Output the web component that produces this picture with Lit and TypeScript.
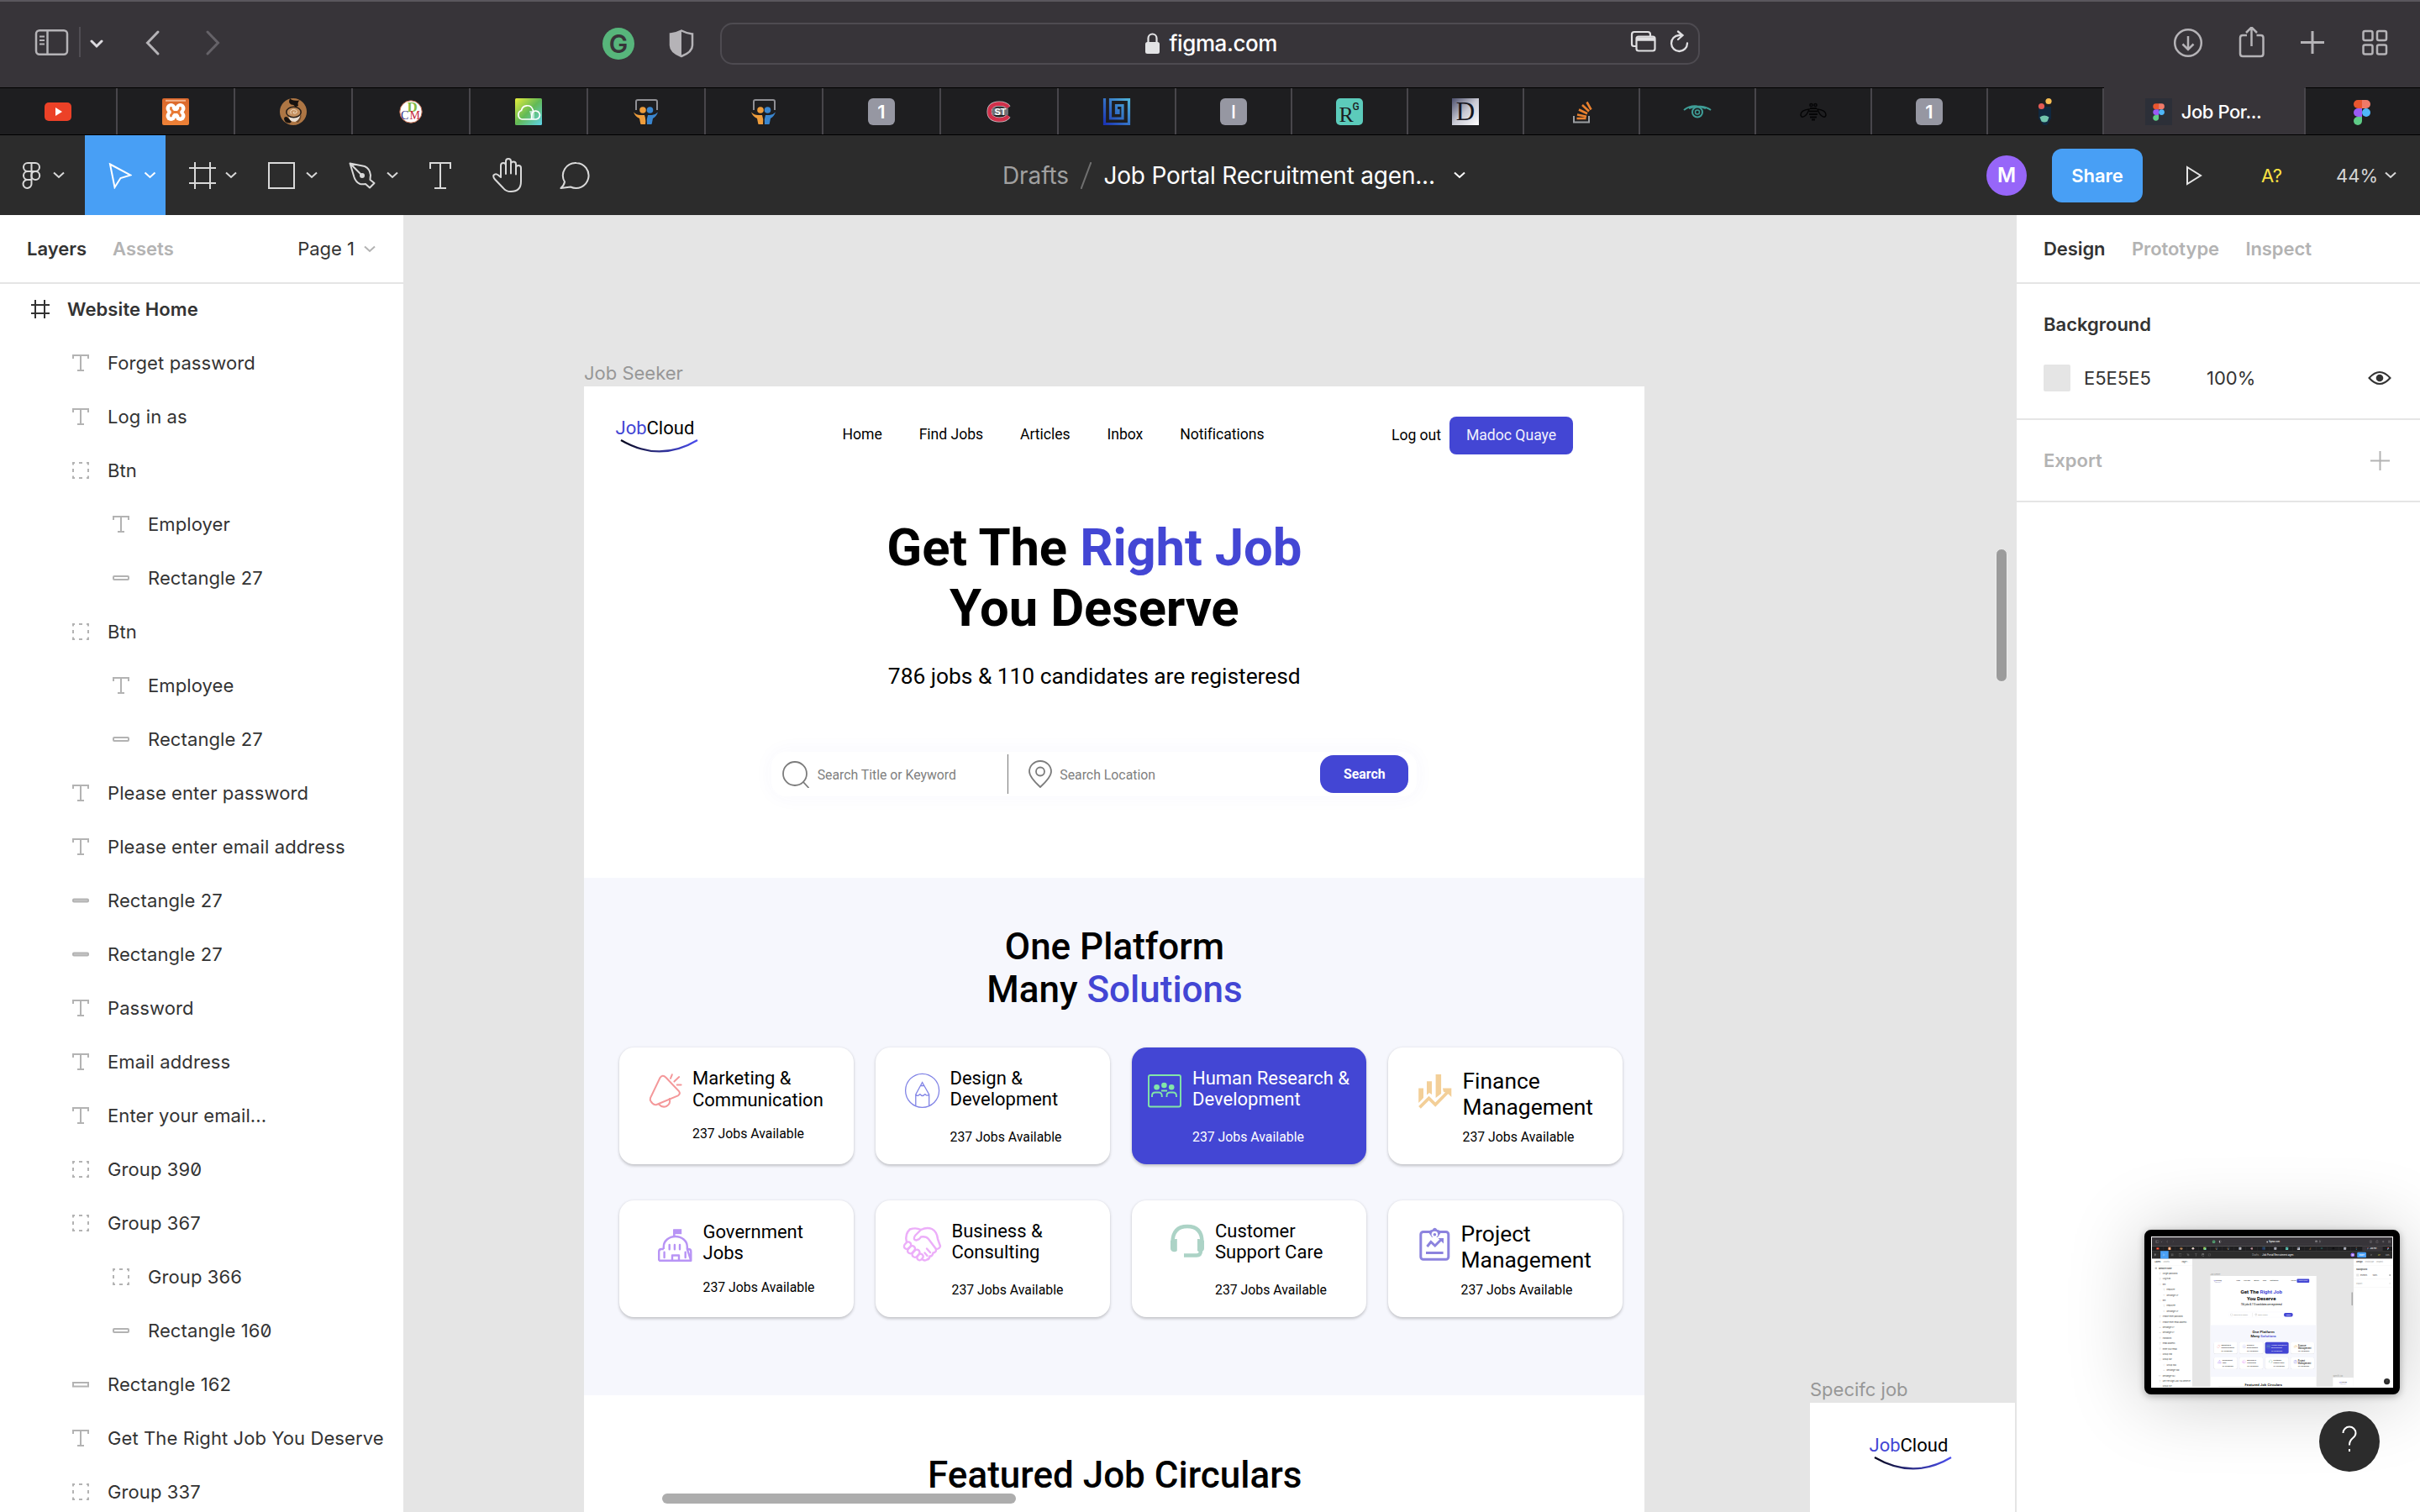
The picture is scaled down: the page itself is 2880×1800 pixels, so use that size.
import { LitElement, html, svg, css, nothing } from "lit";
import { customElement, property } from "lit/decorators.js";

type Kind = "frame" | "text" | "group" | "rect" | "rect-filled" | "rect-square";
interface Layer { kind: Kind; name: string; depth: number; }

const layers: Layer[] = [
  { kind: "frame", name: "Website Home", depth: 0 },
  { kind: "text", name: "Forget password", depth: 1 },
  { kind: "text", name: "Log in as", depth: 1 },
  { kind: "group", name: "Btn", depth: 1 },
  { kind: "text", name: "Employer", depth: 2 },
  { kind: "rect", name: "Rectangle 27", depth: 2 },
  { kind: "group", name: "Btn", depth: 1 },
  { kind: "text", name: "Employee", depth: 2 },
  { kind: "rect", name: "Rectangle 27", depth: 2 },
  { kind: "text", name: "Please enter password", depth: 1 },
  { kind: "text", name: "Please enter email address", depth: 1 },
  { kind: "rect-filled", name: "Rectangle 27", depth: 1 },
  { kind: "rect-filled", name: "Rectangle 27", depth: 1 },
  { kind: "text", name: "Password", depth: 1 },
  { kind: "text", name: "Email address", depth: 1 },
  { kind: "text", name: "Enter your email...", depth: 1 },
  { kind: "group", name: "Group 390", depth: 1 },
  { kind: "group", name: "Group 367", depth: 1 },
  { kind: "group", name: "Group 366", depth: 2 },
  { kind: "rect", name: "Rectangle 160", depth: 2 },
  { kind: "rect-square", name: "Rectangle 162", depth: 1 },
  { kind: "text", name: "Get The Right Job You Deserve", depth: 1 },
  { kind: "group", name: "Group 337", depth: 1 },
];

const layerIcon = (kind: Kind) => {
  switch (kind) {
    case "frame":
      return svg`<path d="M4 -1v22M15 -1v22M-1 5h22M-1 15h22" stroke="#333" stroke-width="2" fill="none"/>`;
    case "text":
      return svg`<path d="M1 5V1h18v4M10 1v18M6 19h8" stroke="#b3b3b3" stroke-width="2" fill="none"/>`;
    case "group":
      return svg`<path d="M1 3.500V1h2M8 1h4M17 1h2v2.500M19 8v4M19 16.500V19h-2M12 19H8M3 19H1v-2.500M1 12V8" stroke="#b3b3b3" stroke-width="2" fill="none"/>`;
    case "rect":
      return svg`<rect x="1" y="8" width="18" height="4" rx="1" stroke="#b3b3b3" stroke-width="2" fill="#fff"/>`;
    case "rect-filled":
      return svg`<rect x="1" y="8.500" width="18" height="3" rx="1" stroke="#b3b3b3" stroke-width="2" fill="#ccc"/>`;
    case "rect-square":
      return svg`<rect x="1" y="8" width="18" height="4.500" stroke="#b3b3b3" stroke-width="2" fill="#fff"/>`;
  }
};

const chevron = (w = 14, color = "#e0e0e0") => html`<svg class="chev" width=${w} height="9" viewBox="0 0 14 9" fill="none" stroke=${color} stroke-width="2"><path d="M1 1.500l6 5.500 6-5.500"/></svg>`;

const people = svg`
  <path d="M4 14V4q0-2 2-2h21q2 0 2 2v10" fill="none" stroke="#8f8f94" stroke-width="2"/>
  <circle cx="12" cy="14" r="3.800" fill="#ee9d3c"/><circle cx="20.500" cy="14" r="3.800" fill="#3a86cf"/>
  <path d="M1 16.500q4 4 9 3.500h4q2 5 1 11h-5q-1 0-1-2l-1-5Q3 22 1 16.500z" fill="#ee9d3c"/>
  <path d="M30 16.500q-4 4-8 3.500h-4q-2 5-1 11h5q1 0 1-2l1-5q4-2 6-7.500z" fill="#3a86cf"/>`;

const figmaMark = svg`
  <path d="M16 2h-5a5 5 0 0 0 0 10h5z" fill="#e8562f"/><path d="M16 2h5a5 5 0 0 1 0 10h-5z" fill="#f07a68"/>
  <path d="M16 12h-5a5 5 0 0 0 0 10h5z" fill="#9a5bf5"/><circle cx="21" cy="17" r="5" fill="#4fb7fa"/>
  <path d="M16 22h-5a5 5 0 1 0 5 5z" fill="#5ecb86"/>`;

const favicons = [
  svg`<rect y="5" width="32" height="22" rx="5" fill="#ec4127"/><path d="M13 11l8 5-8 5z" fill="#fff"/>`,
  svg`<defs><linearGradient id="xa" x2="0" y2="1"><stop stop-color="#d9662b"/><stop offset="1" stop-color="#ee8237"/></linearGradient></defs>
      <rect width="32" height="32" rx="2" fill="url(#xa)"/><path d="M4 2.800h24" stroke="#f3b48c" stroke-width="2"/>
      <g fill="#fff"><circle cx="10.500" cy="12" r="6"/><circle cx="21.500" cy="12" r="6"/><circle cx="10.500" cy="21" r="6"/><circle cx="21.500" cy="21" r="6"/><rect x="8" y="13" width="16" height="7"/></g>
      <path d="M10.500 11.500v1.500l2 2.500v2l-2 2.500v1M21.500 11.500v1.500l-2 2.500v2l2 2.500v1M12 16.500h8" fill="none" stroke="#e87a35" stroke-width="2.800" stroke-linecap="round"/>`,
  svg`<circle cx="16" cy="16" r="16" fill="#ae7644"/><path d="M12.500 0q1 3.500 11 2.500-3 2.500-1.500 6.500l-4 1.500q-.5-3-4.500-3Q9 4.500 12.500 0z" fill="#17120f"/>
      <path d="M10 18q0 10 8 10 7-1 7-12z" fill="#e9dfd3"/><path d="M5 24q1-3 4-1.500l5 5.500-2 1.500q-7 0-7-5.500z" fill="#17120f"/><path d="M19 28q5-3 5.500-9l1 1q0 6-4 9z" fill="#6e4a2c"/>
      <ellipse cx="16.500" cy="16.500" rx="8.700" ry="6.300" fill="#c4905f" stroke="#2a2019" stroke-width="1.600"/><path d="M13.500 18.500q-2.500-4.500 3-5 4.500.5 3.500 3.500-2 2-4 .5 0-2 1.500-1.500" fill="none" stroke="#f1dcc4" stroke-width="1"/>`,
  svg`<circle cx="16" cy="16" r="13.200" fill="#fff" stroke="#c06a4d" stroke-width="1"/>
      <text x="11.500" y="16" font-family="Liberation Serif, serif" font-size="17" font-weight="700" fill="#86b943">D</text>
      <text x="4" y="24.500" font-family="Liberation Serif, serif" font-size="14" fill="#322f83">C</text>
      <text x="14.500" y="25" font-family="Liberation Serif, serif" font-size="14" fill="#c5283c">M</text>`,
  svg`<defs><linearGradient id="cl" x2="1" y2="1"><stop stop-color="#e5ee3d"/><stop offset=".5" stop-color="#62b956"/><stop offset="1" stop-color="#5ed4ea"/></linearGradient></defs>
      <rect width="32" height="32" rx="1.500" fill="url(#cl)"/><path d="M17 15l6 0v10h-3z" fill="#d9f5f1" opacity=".7"/>
      <path d="M8 25a5.500 5.500 0 0 1-.500-10.500 7 7 0 0 1 13.500-1q1 2 .500 3M8 25h17a5 5 0 1 0-4.500-8q-1 3-1 8" fill="none" stroke="#fff" stroke-width="1.700"/>`,
  people,
  people,
  svg`<rect width="32" height="32" rx="6" fill="#9697a2"/><text x="16" y="24" text-anchor="middle" font-family="Inter, sans-serif" font-size="22" font-weight="600" fill="#fff">1</text>`,
  svg`<path d="M27 11Q24 6.500 16 6.500 4.500 7 4.500 16T16 25.500q8 0 11-4.500" fill="none" stroke="#c9c9cd" stroke-width="6"/><path d="M27 11Q24 6.500 16 6.500 4.500 7 4.500 16T16 25.500q8 0 11-4.500" fill="none" stroke="#d0304a" stroke-width="4.600"/>
      <rect x="8" y="11.500" width="19" height="8.500" rx="1" fill="#6f6f74"/>
      <text x="17.500" y="19.600" text-anchor="middle" font-family="Liberation Sans, sans-serif" font-size="11" font-weight="700" fill="#fff">ST</text>`,
  svg`<defs><linearGradient id="sp" x1="1" x2="0" y2="1"><stop stop-color="#4fb3d8"/><stop offset="1" stop-color="#1b35b5"/></linearGradient></defs>
      <path d="M1.500 0v30.500h29V1.500H8.500V24h14.500V8.500h-7.500v9h2.500v-4.500" fill="none" stroke="url(#sp)" stroke-width="3.200"/>`,
  svg`<rect width="32" height="32" rx="6" fill="#9697a2"/><text x="16" y="24" text-anchor="middle" font-family="Inter, sans-serif" font-size="22" font-weight="500" fill="#fff">I</text>`,
  svg`<rect width="32" height="32" rx="5" fill="#5ccbbb"/><text x="3.500" y="27.500" font-family="Liberation Serif, serif" font-size="26" fill="#1c1d1f">R</text>
      <text x="19.500" y="13.500" font-family="Roboto, sans-serif" font-size="12" font-weight="500" fill="#1c1d1f">G</text>`,
  svg`<defs><linearGradient id="dd" x2="1" y2="1"><stop stop-color="#4c4f6c"/><stop offset=".5" stop-color="#c9cad4"/><stop offset="1" stop-color="#fff"/></linearGradient></defs>
      <rect width="32" height="32" fill="url(#dd)"/><text x="16" y="26" text-anchor="middle" font-family="Liberation Serif, serif" font-size="31" fill="#17181f">D</text>`,
  svg`<path d="M7 21v7.500h18V21" fill="none" stroke="#9b9ea2" stroke-width="2"/>
      <path d="M10.500 24h11M11 19.500l11 2.200M13 13.500l10 4.700M17 8l8 7.500M22.500 4.500l5 9" fill="none" stroke="#e9812f" stroke-width="2.600"/>`,
  svg`<path d="M0 14Q7 8.500 16 9.500 26 9.500 32 14" fill="none" stroke="#3f9e97" stroke-width="2"/><path d="M6 12q10-4 20 0" stroke="#3f9e97" stroke-width="2" fill="none"/>
      <circle cx="16" cy="16.500" r="6" fill="none" stroke="#3f9e97" stroke-width="2"/><circle cx="16" cy="16.500" r="2.500" fill="none" stroke="#3f9e97" stroke-width="1.500"/>`,
  svg`<g fill="none" stroke="#050506" stroke-width="1.500"><path d="M11 13Q1 14 1 20q1 4 5 1 3-2 5-8zM21 13q10 1 10 7-1 4-5 1-3-2-5-8z"/><circle cx="13.500" cy="8" r="1.600"/><circle cx="18.500" cy="8" r="1.600"/></g>
      <path d="M12 12h8M11 15.500h10M11 19h10M12 22.500h8M14 25.500h4" stroke="#050506" stroke-width="2.200"/>`,
  svg`<rect width="32" height="32" rx="6" fill="#9697a2"/><text x="16" y="24" text-anchor="middle" font-family="Inter, sans-serif" font-size="22" font-weight="600" fill="#fff">1</text>`,
  svg`<path d="M8 10h15v14l-5 8h-4l-6-8z" fill="#10283f"/><circle cx="20" cy="3.500" r="3.600" fill="#f6bd54"/><circle cx="11.500" cy="9.500" r="3.600" fill="#e35a53"/>
      <path d="M9.500 22.500q5.500-4 11 0l-2 5q-3.500 2-7 0z" fill="#71c5ae"/>`,
];

interface Card { id: string; lines: string[]; icon: unknown; }
const cards: Card[] = [
  { id: "c0", lines: ["Marketing &", "Communication"], icon: svg`<g fill="none" stroke="#f4989a" stroke-width="2" stroke-linecap="round"><path d="M20.500 5.700L36 22q2.200 3.500-1.200 5.300L9.500 38q-2.800.8-5-1.500l-1.700-2Q1.200 32.500 2 30L13.500 6q3-4.200 7-.3z"/><path d="M26 6.800l1.800-4.500M30.400 10.600l5.800-5.500M33.700 14.400h4.900M12 37.500q4 4.500 9 2.500 5.500-3 3.800-9"/></g>` },
  { id: "c1", lines: ["Design &", "Development"], icon: svg`<g fill="none" stroke="#8083e6" stroke-width="1.300"><circle cx="21.600" cy="21.300" r="20"/><path d="M13.800 39.500V26l7.800-14.500L29.700 26v13.500M13.800 26q2 2.500 4 .5 1-1.500 2 0 2 2 4 0 1-1.500 2 0 2 1.500 3.900-.5M19.500 15.500h4"/></g>` },
  { id: "c2", lines: ["Human Research &", "Development"], icon: svg`<g fill="none" stroke="#82e6a8" stroke-width="1.900"><rect x="2" y="3" width="38" height="37.500" rx="2"/><path d="M6 29v-1.500q0-4 4-4h4q3.500 0 3.800 4V29M23.500 29v-1.500q0-4 4-4h3.500q3.800 0 4 4V29M17 21.500h7"/></g><g fill="#82e6a8"><circle cx="11.600" cy="17.200" r="3.300"/><circle cx="20.400" cy="15" r="3.300"/><circle cx="29.200" cy="17.200" r="3.300"/></g>` },
  { id: "c3", lines: ["Finance", "Management"], icon: svg`<g fill="#f3cf98"><path d="M2.200 18.500h5.800V30l-5.800 6zM12 10.300h6V26l-3-2-3 2.500zM22.600 2h6.500v23l-6.500 5zM31 18.500h10.300V29l-3.500-3.600-6-3z"/></g><path d="M3.500 41.300l11-10.800 7.700 7.500L37.500 22.500" fill="none" stroke="#f3cf98" stroke-width="3.800"/>` },
  { id: "c4", lines: ["Government", "Jobs"], icon: svg`<g fill="none" stroke="#b894f5" stroke-width="2.400" stroke-linejoin="round"><path d="M7.800 27v-3a14 12 0 0 1 28 0v3M2.200 40.700V30q0-3 3-3h2.600M35.800 27h1.500q3 0 3 3v10.700zM2.200 40.700h38M20.300 12V4M18 40.500V34.500h8v6"/><path d="M14.700 22v5.300M20.900 22v5.300M27 22v5.300M8.600 30.700V37M33.700 30.700V37" stroke-linecap="round"/></g><rect x="19.200" y="3.200" width="10" height="6" fill="#b894f5"/>` },
  { id: "c5", lines: ["Business &", "Consulting"], icon: svg`<g fill="none" stroke="#ecaef9" stroke-width="2.400" stroke-linejoin="round" stroke-linecap="round"><path d="M4.800 19q-2-9 4-14.500Q16 2 22 5q7-3.500 13-1 6 3 7 12l3 8.500q-1 3.500-5 3.500.5 4-3.500 4.500-1 4.500-4 4-.5 4-3.500 4Q27 42.500 24 40.500"/><path d="M22 5l-7 7q-3 5 1.500 5.500Q20 17 22 13.500q6-1 9 2.500l9 12M33 32l-4-4.500M29.500 36l-3-3.500"/>
      <rect x="1.500" y="20.500" width="9" height="6.500" rx="3.200" transform="rotate(-48 6 23.700)"/><rect x="5.500" y="25.500" width="10" height="6.500" rx="3.200" transform="rotate(-48 10.500 28.700)"/><rect x="11" y="30" width="10" height="6.500" rx="3.200" transform="rotate(-48 16 33.200)"/><rect x="17" y="34.500" width="8" height="6" rx="3" transform="rotate(-48 21 37.500)"/></g>` },
  { id: "c6", lines: ["Customer", "Support Care"], icon: svg`<path d="M3.500 20q0-19 17.500-19t17.500 19M37 28v2q0 5.500-5 5.500H17" fill="none" stroke="#acd3c6" stroke-width="4.400"/><path d="M1 18q3-2.500 7.800-2V30q-2 2-4.800 1-3-1-3-4zM33 16q5-.5 8 2v9q0 3-3 4-3 1-5-1z" fill="#acd3c6"/>` },
  { id: "c7", lines: ["Project", "Management"], icon: svg`<g fill="none" stroke="#8c83de" stroke-width="3"><rect x="2.800" y="7.500" width="33" height="32.800" rx="3"/><path d="M10.400 25l4.500-5.500 4.900 4.500 7-7M9 32.500h20.600"/></g><path d="M12 8q1.500-3 4.500-3 3-4.500 6 0 3 0 4.500 3l-4 6h-7z" fill="#8c83de"/><circle cx="19.400" cy="10.500" r="3.800" fill="#fff"/><circle cx="19.400" cy="10.800" r="1.800" fill="#8c83de"/><path d="M23.500 15h6.500v6.500z" fill="#8c83de"/>` },
];

@customElement("job-logo")
class JobLogo extends LitElement {
  static styles = css`
    :host { display: flex; flex-direction: column; width: 100px; font: 400 22px/26px Roboto, sans-serif; color: #000; }
    .accent { color: #4346d4; }
    svg { display: block; }
  `;
  render() {
    return html`<span><span class="accent">Job</span>Cloud</span>
      <svg width="98" height="17" viewBox="0 0 98 17" fill="none"><defs><linearGradient id="g"><stop stop-color="#05051a"/><stop offset=".35" stop-color="#23246a"/><stop offset="1" stop-color="#4a4df0"/></linearGradient></defs>
      <path d="M6 1C36 18.500 66 19.500 97 1" stroke="url(#g)" stroke-width="2.300"/></svg>`;
  }
}

@customElement("job-page")
class JobPage extends LitElement {
  static styles = css`
    :host { display: block; height: 1340px; background: #fff; font-family: Roboto, sans-serif; color: #000; overflow: hidden; }
    .accent { color: #4346d4; }
    header { display: flex; align-items: center; height: 116px; padding: 0 85px 0 37.5px; font-size: 17.6px; box-sizing: border-box; }
    nav { display: flex; gap: 44px; margin-left: 170px; padding-bottom: 2px; letter-spacing: -0.04px; }
    .logout { margin-left: auto; letter-spacing: -0.04px; }
    .user { display: flex; align-items: center; justify-content: center; width: 147px; height: 45px; border-radius: 8px; background: #4346d4; color: #f0f0fc; margin-left: 10px; }
    .hero { display: flex; flex-direction: column; align-items: center; height: 469px; padding: 40px 47.500px 0 0; box-sizing: border-box; }
    h1, h2 { margin: 0; text-align: center; }
    h1 { font: 700 61.6px/72px Roboto, sans-serif; letter-spacing: -0.15px; }
    .sub { margin-top: 29.500px; font-size: 26.4px; line-height: 31px; letter-spacing: -0.04px; }
    .search { display: flex; align-items: center; width: 768px; height: 53px; margin-top: 74px; padding: 0 10px 0 11.500px; box-sizing: border-box; border-radius: 17px; box-shadow: 0 0 24px rgba(67, 70, 212, 0.045); color: #808080; font-size: 15.84px; }
    .search svg { display: block; }
    .q { width: 226px; margin-left: 9px; padding-top: 2px; letter-spacing: -0.03px; }
    .rule { width: 1.500px; height: 47px; background: #777; margin-right: 24px; }
    .loc { margin-left: 9px; padding-top: 2px; }
    .go { display: flex; align-items: center; justify-content: center; width: 105px; height: 45px; margin-left: auto; border-radius: 16px; background: #4346d4; color: #fff; font-weight: 700; }
    .solutions { height: 616px; padding: 56.500px 0 0 42px; box-sizing: border-box; background: #f6f7fd; }
    h2 { font: 500 44px/51.6px Roboto, sans-serif; }
    .solutions h2 { margin-right: 41px; }
    .cards { display: grid; grid-template-columns: repeat(4, 279px); grid-auto-rows: 139px; gap: 43px 26px; margin-top: 42px; }
    .card { display: flex; align-items: flex-start; gap: 12px; padding-top: 24px; box-sizing: border-box; background: #fff; border-radius: 17.6px; box-shadow: 0 1.800px 3.500px rgba(0, 0, 0, 0.22); white-space: nowrap; }
    .card svg { display: block; flex: none; margin-top: 6px; overflow: visible; }
    .title { font-size: 22px; line-height: 25.800px; }
    .count { margin-top: 22.500px; font-size: 15.84px; line-height: 18.600px; }
    .c0 { padding-left: 35px; gap: 10px; padding-top: 24.600px; }
    .c1 { padding-left: 34px; gap: 12.500px; }
    .c2 { padding-left: 18px; gap: 12px; background: #4346d4; color: #fff; }
    .c3 { padding-left: 34px; gap: 12.500px; }
    .c4 { padding-left: 45px; gap: 12.500px; padding-top: 25px; }
    .c5 { padding-left: 32px; gap: 16.500px; }
    .c6 { padding-left: 45px; }
    .c7 { padding-left: 36px; gap: 8.500px; }
    .c0 .count, .c4 .count { margin-top: 18.500px; }
    .c3 .title, .c7 .title { font-size: 26.4px; line-height: 30.900px; padding-top: 1px; }
    .c3 .count, .c7 .count { margin-top: 11.500px; }
    .featured { padding: 69.500px 0 0 1.500px; }
  `;
  render() {
    return html`
      <header>
        <job-logo></job-logo>
        <nav>${["Home", "Find Jobs", "Articles", "Inbox", "Notifications"].map((n) => html`<span>${n}</span>`)}</nav>
        <span class="logout">Log out</span>
        <span class="user">Madoc Quaye</span>
      </header>
      <section class="hero">
        <h1>Get The <span class="accent">Right Job</span><br>You Deserve</h1>
        <div class="sub">786 jobs &amp; 110 candidates are registeresd</div>
        <div class="search">
          <svg width="34" height="34" viewBox="0 0 34 34" fill="none" stroke="#7c7c7c" stroke-width="1.800"><circle cx="16" cy="17" r="14"/><path d="M26 27l6.500 7"/></svg>
          <span class="q">Search Title or Keyword</span>
          <span class="rule"></span>
          <svg width="28" height="34" viewBox="0 0 28 34" fill="none" stroke="#7c7c7c" stroke-width="1.800"><path d="M14 33Q1 21 1 14.500a13 12.500 0 0 1 26 0Q27 21 14 33z"/><circle cx="14" cy="14.500" r="5"/></svg>
          <span class="loc">Search Location</span>
          <span class="go">Search</span>
        </div>
      </section>
      <section class="solutions">
        <h2>One Platform<br>Many <span class="accent">Solutions</span></h2>
        <div class="cards">
          ${cards.map((c) => html`<article class="card ${c.id}">
            <svg width="42" height="44" viewBox="0 0 42 44">${c.icon}</svg>
            <div><div class="title">${c.lines[0]}<br>${c.lines[1]}</div><div class="count">237 Jobs Available</div></div>
          </article>`)}
        </div>
      </section>
      <section class="featured"><h2>Featured Job Circulars</h2></section>`;
  }
}

@customElement("editor-screen")
class EditorScreen extends LitElement {
  @property({ type: Boolean }) mini = false;

  static styles = css`
    :host { display: flex; flex-direction: column; width: 2880px; height: 1800px; overflow: hidden; background: #fff; font-family: Inter, "Liberation Sans", sans-serif; position: relative; }
    svg { display: block; flex: none; }
    .browser { display: flex; align-items: center; height: 104px; box-sizing: border-box; border-top: 2px solid #5a575d; padding: 0 37px 2px 40px; background: #373439; }
    .sep { width: 2px; height: 36px; background: #504d53; margin: 0 11px 4px 10px; }
    .back { margin-left: 50px; }
    .fwd { margin-left: 53px; }
    .ext { margin-left: 454px; }
    .shield { margin-left: 39.500px; }
    .url { display: flex; align-items: center; width: 1166px; height: 50px; box-sizing: border-box; margin-left: 31.500px; padding: 0 11px 0 503.500px; border: 2px solid #4e4b51; border-radius: 15px; color: #fff; font-size: 26px; }
    .url span { margin: 0 0 1px 12px; letter-spacing: -0.4px; font-weight: 500; }
    .url .tabsicon { margin-left: auto; }
    .reload { margin-left: 14px; }
    .actions { display: flex; gap: 41px; margin-left: auto; }
    .tabs { display: flex; height: 57px; flex: none; background: #1e1e20; }
    .tab { display: flex; align-items: center; justify-content: center; width: 140px; box-sizing: border-box; border: solid #000; border-width: 1px 0; position: relative; }
    .tab:nth-child(n + 11) { width: 138px; }
    .tab svg { margin-right: 2px; overflow: visible; }
    .tab.active { width: 240px; border-top-color: #373439; background: #373439; color: #fff; font-size: 22px; font-weight: 500; letter-spacing: -0.45px; gap: 9px; padding-right: 4px; }
    .tab:nth-child(20) { width: 136px; }
    .tab:not(:last-child)::after { content: ""; width: 2px; height: 55px; position: absolute; right: 0; top: 0; background: #48464b; }
    .bar { display: grid; grid-template-columns: 1193px auto 1fr; align-items: center; height: 95px; flex: none; background: #2c2c2c; color: #fff; }
    .tools { display: flex; align-items: center; height: 95px; }
    .tool { display: flex; align-items: center; justify-content: space-between; box-sizing: border-box; height: 95px; }
    .menu { width: 101px; padding: 0 24px 0 26px; }
    .move { width: 96px; padding: 0 11px 0 28px; background: #489ff5; }
    .frame { padding-left: 28px; box-sizing: content-box; width: 57px; }
    .shape { margin-left: 37px; width: 59px; }
    .pen { margin-left: 37px; width: 59px; }
    .t { margin-left: 37px; }
    .hand { margin-left: 49px; }
    .note { margin-left: 43.500px; }
    .title { display: flex; align-items: center; font-size: 28px; }
    .drafts { color: #a0a0a0; width: 80px; letter-spacing: -0.1px; }
    .slash { margin: 0 15px 0 12.500px; }
    .file { margin-right: 22px; letter-spacing: -0.2px; }
    .right { display: flex; align-items: center; justify-content: flex-end; padding-right: 28px; font-size: 22px; }
    .avatar { display: flex; align-items: center; justify-content: center; width: 48px; height: 48px; border-radius: 50%; background: #9766f9; font-size: 24px; font-weight: 600; }
    .share { display: flex; align-items: center; justify-content: center; width: 108px; height: 64px; margin-left: 30px; border-radius: 12px; background: #489ff5; font-weight: 600; }
    .play { margin-left: 51px; }
    .missing { width: 29px; margin-left: 70px; color: #fae243; }
    .zoom { width: 50px; margin: 0 8px 0 60px; color: #d5d5d5; }
    .body { display: flex; flex: 1; min-height: 0; }
    .panel { width: 480px; background: #fff; color: #333; font-size: 22px; overflow: hidden; flex: none; }
    .head { display: flex; align-items: center; height: 82px; box-sizing: border-box; border-bottom: 2px solid #e5e5e5; padding: 0 33px 0 32px; font-weight: 600; }
    .off { color: #b3b3b3; }
    .assets { margin-left: 31px; }
    .pagesel { margin: 0 11px 0 auto; font-weight: 400; }
    .list { margin-top: -2px; font-feature-settings: "zero"; letter-spacing: 0.1px; }
    .row { display: flex; align-items: center; gap: 22px; height: 64px; padding-left: 86px; }
    .row svg { overflow: visible; }
    .d0 { padding-left: 38px; font-weight: 600; }
    .d2 { padding-left: 134px; }
    .canvas { position: relative; width: 1920px; background: #e5e5e5; overflow: hidden; flex: none; }
    .node { position: absolute; font: 400 22px/31px Inter, sans-serif; color: #979797; }
    .seeker { left: 215px; top: 173px; width: 1262px; }
    .specific { left: 1674px; top: 1383px; width: 244px; }
    .artboard { height: 130px; background: #fff; padding: 37.500px 0 0 70.500px; box-sizing: border-box; }
    .hbar { position: absolute; left: 308px; top: 1522px; width: 421px; height: 12px; border-radius: 6px; background: #adadad; }
    .vbar { position: absolute; left: 1895px; top: 397px; width: 14px; height: 159px; border-radius: 7px; background: #9b9b9b; border: 1px solid #eee; box-sizing: border-box; }
    .props .head { gap: 31.500px; letter-spacing: -0.08px; }
    .fill { height: 162px; border-bottom: 2px solid #e5e5e5; box-sizing: border-box; padding: 34px 34px 0 32px; }
    .strong { font-weight: 600; line-height: 28px; }
    .color { display: flex; align-items: center; margin-top: 34px; height: 32px; }
    .swatch { width: 32px; height: 32px; background: #e5e5e5; border-radius: 2px; margin-right: 16px; }
    .hex { width: 146px; }
    .color svg { margin-left: auto; }
    .export { display: flex; align-items: center; justify-content: space-between; height: 98px; border-bottom: 2px solid #e5e5e5; box-sizing: border-box; padding: 0 36px 0 32px; color: #b3b3b3; }
    .shot { position: absolute; left: 2552px; top: 1464px; width: 304px; height: 196px; box-sizing: border-box; border: 8px solid #000; border-radius: 8px; background: #fff; box-shadow: 0 4px 90px rgba(0, 0, 0, 0.22), 0 2px 8px rgba(0, 0, 0, 0.3); }
    .shot-view { width: 288px; height: 180px; overflow: hidden; box-sizing: border-box; border: 1px solid #fff; }
    .shot-view editor-screen { transform: scale(0.1); transform-origin: 0 0; }
    .help { position: absolute; left: 2760px; top: 1680px; width: 72px; height: 72px; border-radius: 50%; background: #2c2c2c; color: #fff; display: flex; align-items: center; justify-content: center; }
  `;

  private browser() {
    return html`<div class="browser">
      <svg width="44" height="40" viewBox="40 32 44 40" fill="none" stroke="#b5b3b7" stroke-width="2.500"><rect x="43" y="36.300" width="37" height="28.500" rx="4"/><path d="M56.500 36v29"/><path d="M47 43.500h6M47 48h6M47 52.500h6" stroke-width="2"/></svg>
      <i class="sep"></i>
      <svg width="16" height="40" viewBox="0 0 16 40" fill="none" stroke="#dddbe0" stroke-width="3"><path d="M2 17l6 6 6-6" stroke-linecap="round"/></svg>
      <svg class="back" width="18" height="40" viewBox="0 0 18 40" fill="none" stroke="#b5b3b7" stroke-width="3" stroke-linecap="round"><path d="M15 6L2.500 19 15 32"/></svg>
      <svg class="fwd" width="18" height="40" viewBox="0 0 18 40" fill="none" stroke="#656268" stroke-width="3" stroke-linecap="round"><path d="M3 6l12.500 13L3 32"/></svg>
      <svg class="ext" width="40" height="40" viewBox="0 0 40 40"><circle cx="20" cy="20" r="19" fill="#57b57b"/><text x="20" y="31" text-anchor="middle" font-family="Inter, sans-serif" font-size="30" font-weight="600" fill="#373439">G</text></svg>
      <svg class="shield" width="30" height="40" viewBox="0 0 30 40"><path d="M15 4.500Q8 8 2 8.500V22q0 8 13 13 13-5 13-13V8.500Q22 8 15 4.500z" fill="none" stroke="#b5b3b7" stroke-width="2.500"/><path d="M15 4.500Q8 8 2 8.500V22q0 8 13 13z" fill="#b5b3b7"/></svg>
      <div class="url">
        <svg width="17" height="26" viewBox="0 0 17 26"><rect y="11" width="17" height="14" rx="2.500" fill="#e3e3e5"/><path d="M3.500 12V6.500a5 5 0 0 1 10 0V12" fill="none" stroke="#e3e3e5" stroke-width="2.200"/></svg>
        <span>figma.com</span>
        <svg class="tabsicon" width="32" height="40" viewBox="1940 32 32 40" fill="none" stroke="#e0dfe2" stroke-width="2.200"><path d="M1947 55h-2.500q-2.500 0-2.500-2.500V41q0-3 3-3h16q3 0 3 3v2"/><rect x="1947.500" y="43.500" width="22" height="17" rx="2.500"/><path d="M1948 46.500h21" stroke-width="4.500"/></svg>
        <svg class="reload" width="24" height="40" viewBox="1986 32 24 40" fill="none" stroke="#e0dfe2" stroke-width="2.300" stroke-linecap="round"><path d="M2001.500 42h-3.500a9.500 9.500 0 1 0 10 9.500M1997 37.500l5.500 4.500-5.500 5"/></svg>
      </div>
      <div class="actions">
        <svg width="36" height="40" viewBox="2586 32 36 40" fill="none" stroke="#b5b3b7" stroke-width="2.500"><circle cx="2604" cy="51" r="15.800"/><path d="M2604 43v15.500M2597.500 52.500l6.500 6.500 6.500-6.500"/></svg>
        <svg width="32" height="40" viewBox="2662 32 32 40" fill="none" stroke="#b5b3b7" stroke-width="2.500"><path d="M2673 42h-5q-3 0-3 3v19q0 3 3 3h21.500q3 0 3-3V45q0-3-3-3h-5M2678.500 55V33M2672 39l6.500-6.500 6.500 6.500"/></svg>
        <svg width="32" height="40" viewBox="2736 32 32 40" fill="none" stroke="#b5b3b7" stroke-width="3"><path d="M2738 50.500h28M2752 37v27"/></svg>
        <svg width="34" height="40" viewBox="2809 32 34 40" fill="none" stroke="#b5b3b7" stroke-width="2.500"><rect x="2812.500" y="37" width="11" height="11" rx="2"/><rect x="2829" y="37" width="11" height="11" rx="2"/><rect x="2812.500" y="53.500" width="11" height="11" rx="2"/><rect x="2829" y="53.500" width="11" height="11" rx="2"/></svg>
      </div>
    </div>`;
  }

  private tabs() {
    return html`<div class="tabs">
      ${favicons.map((f) => html`<div class="tab"><svg width="32" height="32" viewBox="0 0 32 32">${f}</svg></div>`)}
      <div class="tab active"><svg width="32" height="32" viewBox="0 0 32 32"><rect width="32" height="32" fill="#2c2f38"/><g transform="translate(5.200 5) scale(.68)">${figmaMark}</g></svg><span>Job Por...</span></div>
      <div class="tab"><svg width="32" height="32" viewBox="0 0 32 32">${figmaMark}</svg></div>
    </div>`;
  }

  private bar() {
    const c = "#d9d9d9";
    return html`<div class="bar">
      <div class="tools">
        <div class="tool menu"><svg width="23" height="34" viewBox="0 0 23 34" fill="none" stroke=${c} stroke-width="2"><path d="M11.500 2H7a4.800 4.800 0 0 0 0 10h4.500zM11.500 2H16a4.800 4.800 0 0 1 0 10h-4.500zM11.500 12H7a4.800 4.800 0 0 0 0 10h4.500zM11.500 22H7a5 5 0 1 0 4.500 5z"/><circle cx="16.300" cy="17" r="4.900"/></svg>${chevron(14, c)}</div>
        <div class="tool move"><svg width="28" height="32" viewBox="0 0 28 32" fill="none" stroke="#fff" stroke-width="2"><path d="M2 2.500l24.500 13-12 3.500-7 11z"/></svg>${chevron(15, "#fff")}</div>
        <div class="tool frame"><svg width="32" height="32" viewBox="0 0 32 32" fill="none" stroke=${c} stroke-width="2"><path d="M7 0v32M25 0v32M0 7h32M0 25h32"/></svg>${chevron(14, c)}</div>
        <div class="tool shape"><svg width="32" height="32" viewBox="0 0 32 32" fill="none" stroke=${c} stroke-width="2"><rect x="1" y="1" width="30" height="30"/></svg>${chevron(14, c)}</div>
        <div class="tool pen"><svg width="32" height="32" viewBox="0 0 32 32" fill="none" stroke=${c} stroke-width="2" stroke-linejoin="round"><path d="M1.500 1.500L19 5q6 2.500 7 10.500-.5 3.500-.5 5.500l5 4-5.500 5.500-5-4.500q-4 .5-6.500 0-5-2-7-8zM1.500 1.500L16 16"/><circle cx="16" cy="16" r="3" fill=${c} stroke="none"/></svg>${chevron(14, c)}</div>
        <svg class="t" width="26" height="32" viewBox="0 0 26 32" fill="none" stroke=${c} stroke-width="2"><path d="M1 8V1h24v7M13 1v30M6 31h14"/></svg>
        <svg class="hand" width="36" height="42" viewBox="0 0 36 42" fill="none" stroke=${c} stroke-width="2" stroke-linejoin="round" stroke-linecap="round"><path d="M10 22.500V9q0-3 3-3t3 3v10M16 9V4q0-3 3-3t3 3v14.500M22 7q0-2.500 3-2.500t3 3V19.500M28 11.500q0-2.500 3-2.500t3 3V28q0 12-12 12-6 0-9-4L3 25.500Q.5 22.500 1.500 20.500 4 18 7 20.500l3 2.500"/></svg>
        <svg class="note" width="36" height="34" viewBox="0 0 36 34" fill="none" stroke=${c} stroke-width="2" stroke-linejoin="round"><path d="M20 2a15 15 0 1 1-7 28.500q-4 .5-11.500 1.500 4-4 4.500-7.500A15 15 0 0 1 20 2z"/></svg>
      </div>
      <div class="title">
        <span class="drafts">Drafts</span>
        <svg class="slash" width="13" height="32" viewBox="0 0 13 32"><path d="M12.500 0L.5 32" stroke="#707070" stroke-width="2"/></svg>
        <span class="file">Job Portal Recruitment agen...</span>${chevron(14, "#fff")}
      </div>
      <div class="right">
        <span class="avatar">M</span><span class="share">Share</span>
        <svg class="play" width="20" height="24" viewBox="0 0 20 24" fill="none" stroke="#e6e6e6" stroke-width="2"><path d="M2 2l16 10L2 22z"/></svg>
        <span class="missing">A?</span><span class="zoom">44%</span>${chevron(14, c)}
      </div>
    </div>`;
  }

  render() {
    return html`${this.browser()}${this.tabs()}${this.bar()}
      <div class="body">
        <aside class="panel">
          <div class="head"><span>Layers</span><span class="off assets">Assets</span><span class="pagesel">Page 1</span>${chevron(14, "#b3b3b3")}</div>
          <div class="list">
            ${layers.map((l) => html`<div class="row d${l.depth}"><svg width="20" height="20" viewBox="0 0 20 20">${layerIcon(l.kind)}</svg><span>${l.name}</span></div>`)}
          </div>
        </aside>
        <main class="canvas">
          <div class="node seeker">Job Seeker<job-page></job-page></div>
          <div class="node specific">Specifc job<div class="artboard"><job-logo></job-logo></div></div>
          <div class="hbar"></div><div class="vbar"></div>
        </main>
        <aside class="panel props">
          <div class="head"><span>Design</span><span class="off">Prototype</span><span class="off">Inspect</span></div>
          <div class="fill">
            <div class="strong">Background</div>
            <div class="color"><i class="swatch"></i><span class="hex">E5E5E5</span><span>100%</span>
              <svg width="28" height="18" viewBox="0 0 28 18" fill="none" stroke="#333" stroke-width="2"><path d="M1.500 9Q14-5 26.500 9 14 23 1.500 9z"/><circle cx="14" cy="9" r="4.300" fill="#333" stroke="none"/></svg></div>
          </div>
          <div class="export"><span class="strong">Export</span><svg width="23" height="23" viewBox="0 0 23 23"><path d="M0 11.500h23M11.500 0v23" stroke="#b3b3b3" stroke-width="2"/></svg></div>
        </aside>
      </div>
      ${this.mini ? nothing : html`<div class="shot"><div class="shot-view"><editor-screen mini></editor-screen></div></div>`}
      <div class="help"><svg width="20" height="40" viewBox="0 0 20 40" fill="none" stroke="#fff" stroke-width="2"><path d="M2.500 10a7.500 7.500 0 0 1 15 0q0 3.500-4 6.500-3.500 3-3.500 8M10 29v3"/></svg></div>`;
  }
}

@customElement("app-root")
class AppRoot extends LitElement {
  static styles = css`:host { display: block; width: 2880px; height: 1800px; overflow: hidden; }`;
  render() {
    return html`<editor-screen></editor-screen>`;
  }
}
